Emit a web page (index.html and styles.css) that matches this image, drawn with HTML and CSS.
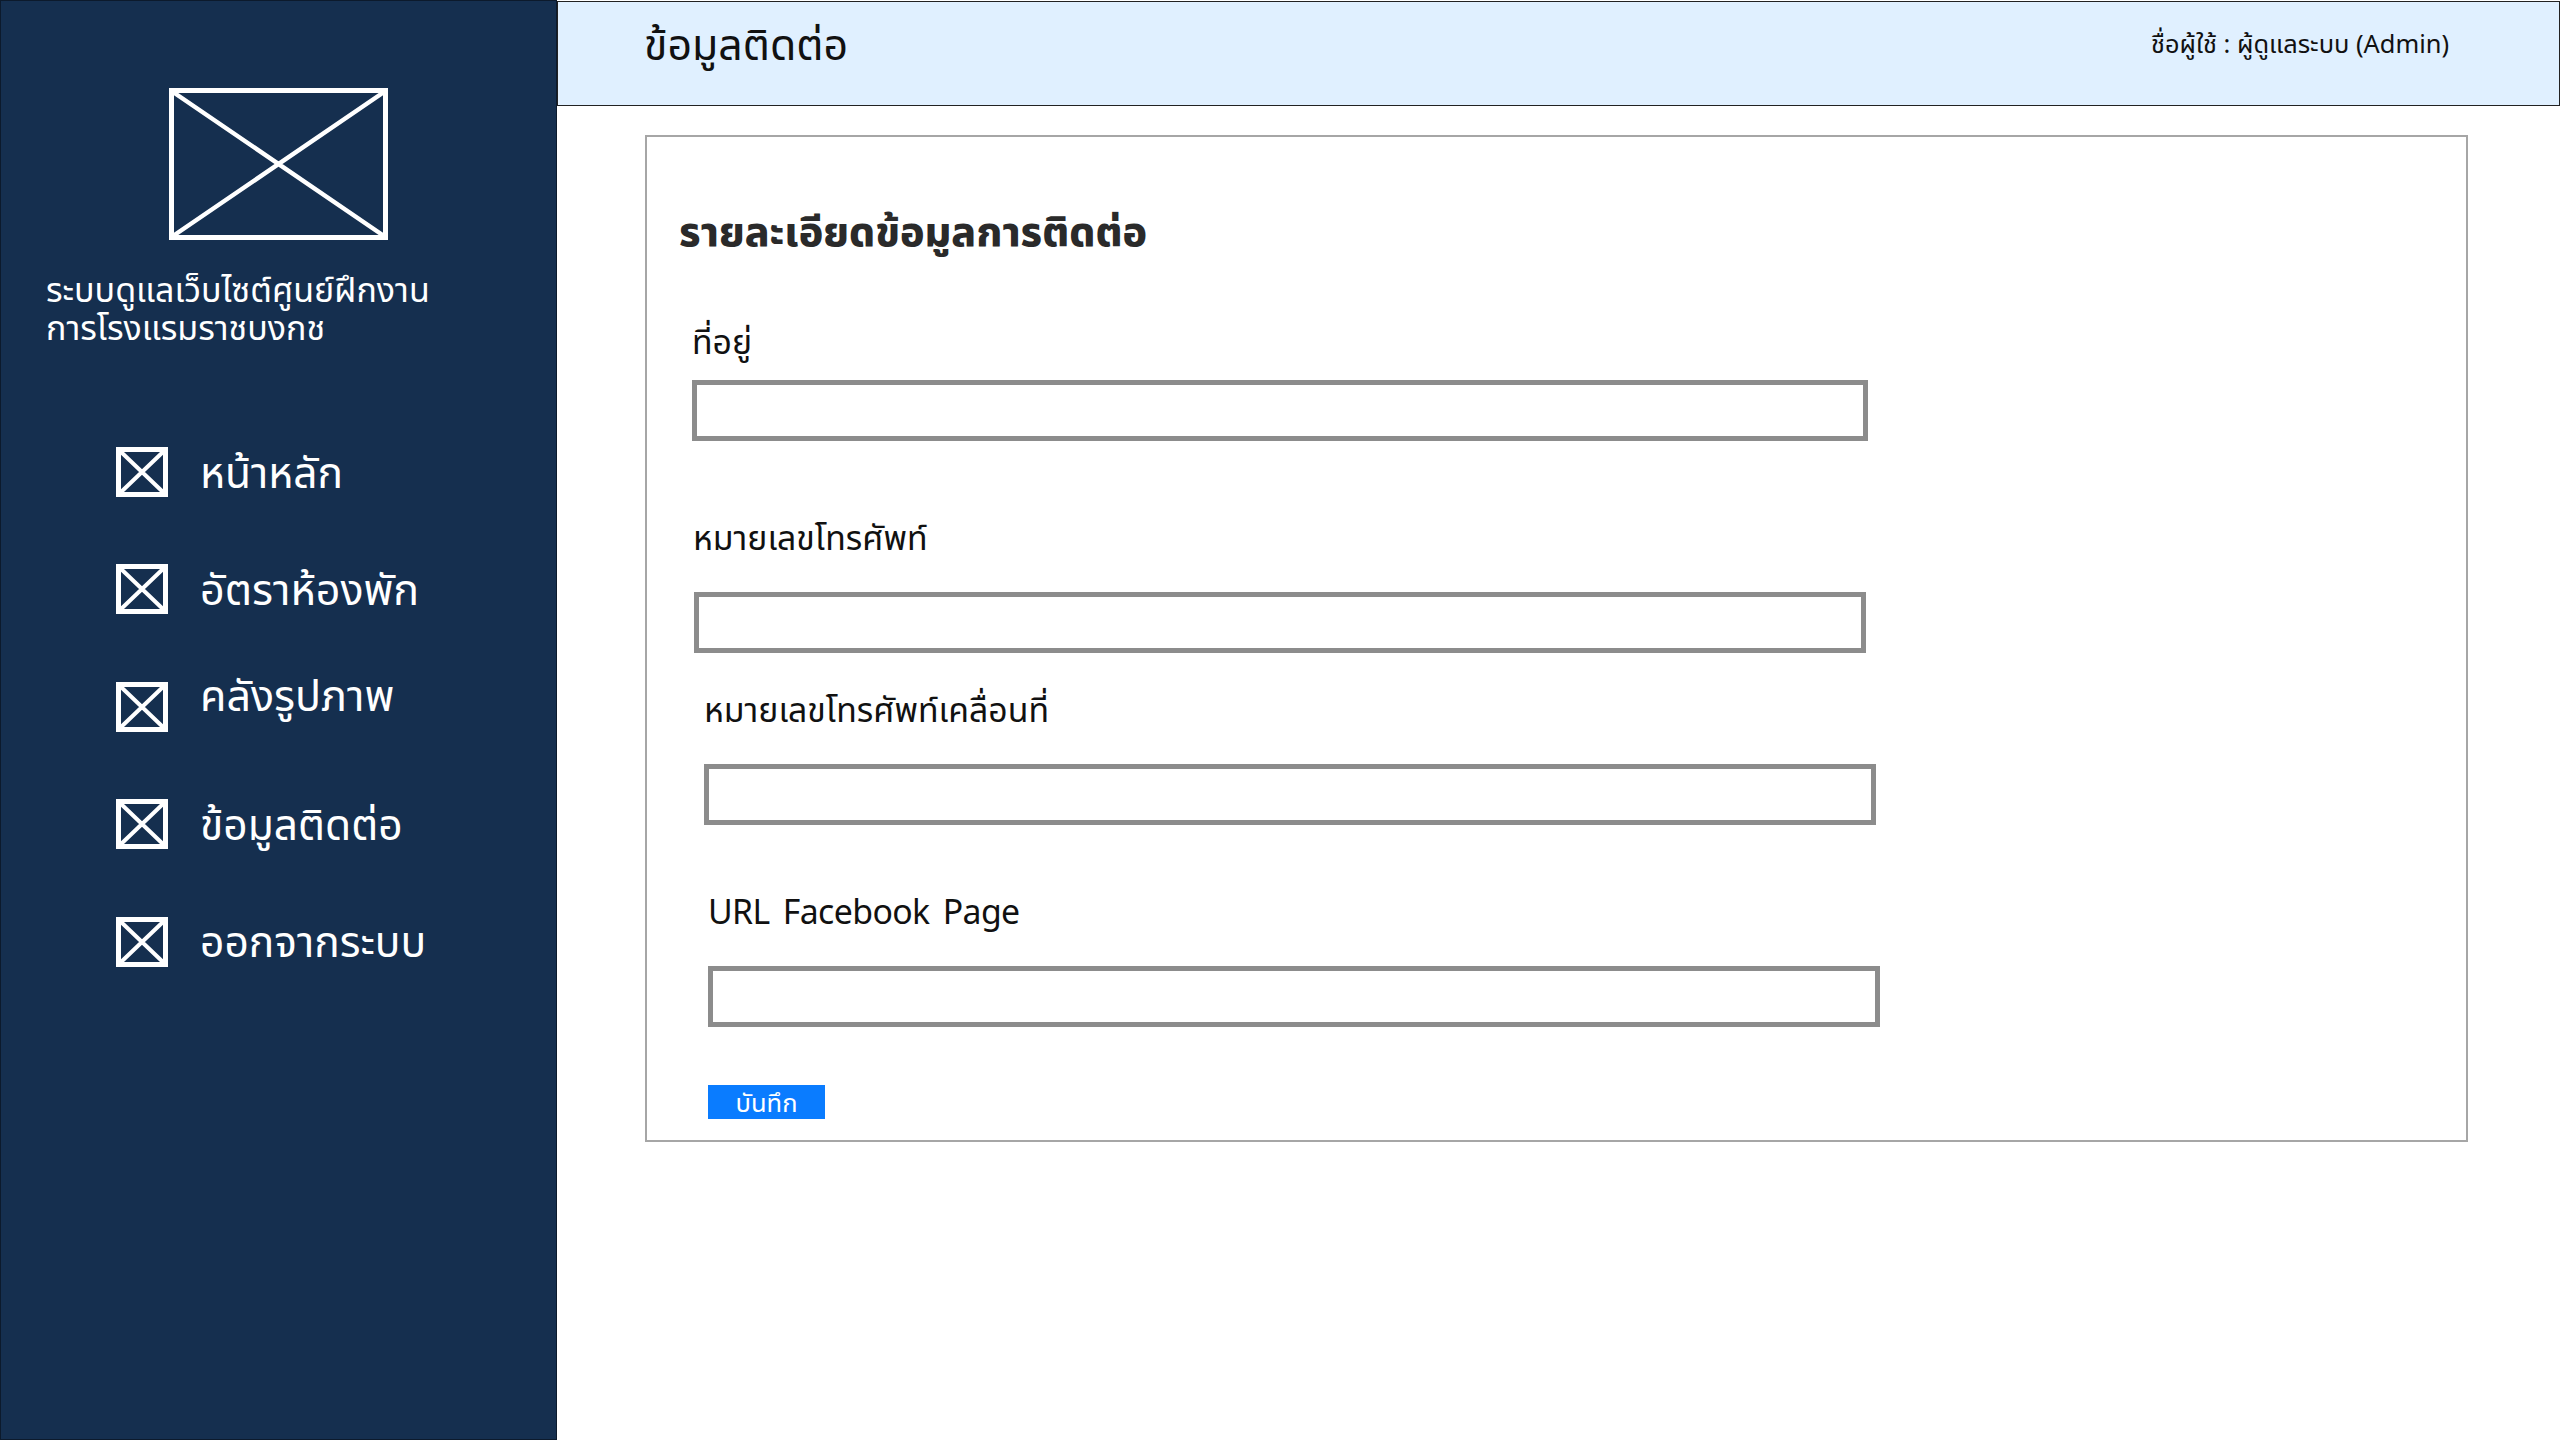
FILE: index.html
```html
<!DOCTYPE html>
<html lang="th">
<head>
<meta charset="utf-8">
<title>ข้อมูลติดต่อ</title>
<link rel="stylesheet" href="styles.css">
</head>
<body>
<div class="app">
  <aside class="sidebar">
    <svg class="logo" viewBox="0 0 219 152" aria-hidden="true">
      <rect x="2.5" y="2.5" width="214" height="147" class="ph"/>
      <path d="M4 4 215 148M215 4 4 148" class="ph-x"/>
    </svg>
    <p class="brand">ระบบดูแลเว็บไซต์ศูนย์ฝึกงาน<br>การโรงแรมราชบงกช</p>
    <nav class="nav">
      <a class="nav-item"><svg class="nav-icon" viewBox="0 0 52 50"><rect x="2.5" y="2.5" width="47" height="45" class="ph"/><path d="M4 4 48 46M48 4 4 46" class="ph-t"/></svg><span>หน้าหลัก</span></a>
      <a class="nav-item"><svg class="nav-icon" viewBox="0 0 52 50"><rect x="2.5" y="2.5" width="47" height="45" class="ph"/><path d="M4 4 48 46M48 4 4 46" class="ph-t"/></svg><span class="wide">อัตราห้องพัก</span></a>
      <a class="nav-item nav-raised"><svg class="nav-icon" viewBox="0 0 52 50"><rect x="2.5" y="2.5" width="47" height="45" class="ph"/><path d="M4 4 48 46M48 4 4 46" class="ph-t"/></svg><span class="wide">คลังรูปภาพ</span></a>
      <a class="nav-item"><svg class="nav-icon" viewBox="0 0 52 50"><rect x="2.5" y="2.5" width="47" height="45" class="ph"/><path d="M4 4 48 46M48 4 4 46" class="ph-t"/></svg><span>ข้อมูลติดต่อ</span></a>
      <a class="nav-item"><svg class="nav-icon" viewBox="0 0 52 50"><rect x="2.5" y="2.5" width="47" height="45" class="ph"/><path d="M4 4 48 46M48 4 4 46" class="ph-t"/></svg><span>ออกจากระบบ</span></a>
    </nav>
  </aside>
  <main class="main">
    <header class="topbar">
      <h1 class="page-title">ข้อมูลติดต่อ</h1>
      <div class="user">ชื่อผู้ใช้ : ผู้ดูแลระบบ (Admin)</div>
    </header>
    <section class="panel">
      <h2 class="panel-title">รายละเอียดข้อมูลการติดต่อ</h2>
      <div class="field f1"><label class="label">ที่อยู่</label><input class="input" type="text"></div>
      <div class="field f2"><label class="label">หมายเลขโทรศัพท์</label><input class="input" type="text"></div>
      <div class="field f3"><label class="label">หมายเลขโทรศัพท์เคลื่อนที่</label><input class="input" type="text"></div>
      <div class="field f4"><label class="label">URL Facebook Page</label><input class="input" type="text"></div>
      <button class="save" type="button">บันทึก</button>
    </section>
  </main>
</div>
</body>
</html>
```
FILE: styles.css
```css
* { box-sizing: border-box; }
html, body { margin: 0; height: 100%; background: #fff; }
body { font-family: "Noto Sans", "Noto Sans Thai", "Noto Sans Thai Looped", "Open Sans", sans-serif; color: #111; }
.app { display: grid; grid-template-columns: 557px 1fr; height: 1440px; }

.sidebar { background: #152f4f; border: 1px solid #0c1a2c; color: #fff; padding-top: 87px; }
.logo { display: block; width: 219px; height: 152px; margin-left: 168px; }
.ph { fill: none; stroke: #fff; stroke-width: 5; }
.ph-x { fill: none; stroke: #fff; stroke-width: 4.5; }
.ph-t { fill: none; stroke: #fff; stroke-width: 4; }
.brand { margin: 29.5px 0 0 45px; font-size: 34px; line-height: 38px; }
.nav { display: flex; flex-direction: column; gap: 67.4px; margin: 101.5px 0 0 115px; }
.nav-item { display: flex; align-items: center; gap: 32px; height: 50px; font-size: 42.5px; color: #fff; }
.nav-item span { margin-top: 5px; }
.nav-item .wide { font-size: 43px; }
.nav-icon { width: 52px; height: 50px; flex: none; }
.nav-item.nav-raised span { margin-top: -18px; }

.main { min-width: 0; }
.topbar { display: flex; justify-content: space-between; align-items: center; height: 105px; margin-top: 1px; padding: 0 110px 14px 87px; background: #e0f0ff; border: 1px solid #222; }
.page-title { margin: 0 0 0 -1px; font-size: 42.8px; font-weight: 400; }
.user { font-size: 25.4px; margin-bottom: 3px; }

.panel { width: 1823px; height: 1007px; margin: 29px 0 0 88px; padding: 65px 0 0 32px; border: 2px solid #a6a6a6; }
.panel-title { margin: 0; font-size: 41px; line-height: 56px; font-weight: 800; color: #2a2a2a; }

.field { display: flex; flex-direction: column; align-items: flex-start; }
.label { font-size: 33.8px; line-height: 44px; color: #111; }
.input { display: block; height: 61px; border: 5px solid #8c8c8c; background: #fff; padding: 0; outline: none; border-radius: 0; }
.f1 { margin: 61px 0 0 13px; }
.f1 .input { width: 1176px; margin-top: 17px; }
.f2 { margin: 74px 0 0 15px; }
.f2 .label { margin-left: -1px; }
.f2 .input { width: 1172px; margin-top: 33px; }
.f3 { margin: 34px 0 0 25px; }
.f3 .input { width: 1172px; margin-top: 33px; }
.f4 { margin: 64px 0 0 29px; }
.f4 .label { letter-spacing: -0.6px; word-spacing: 5px; }
.f4 .input { width: 1172px; margin-top: 33px; }
.save { display: block; width: 117px; height: 34px; margin: 58px 0 0 29px; padding: 0; border: 0; background: #0a7cff; color: #fff; font: inherit; font-size: 25.5px; line-height: 34px; }
```
